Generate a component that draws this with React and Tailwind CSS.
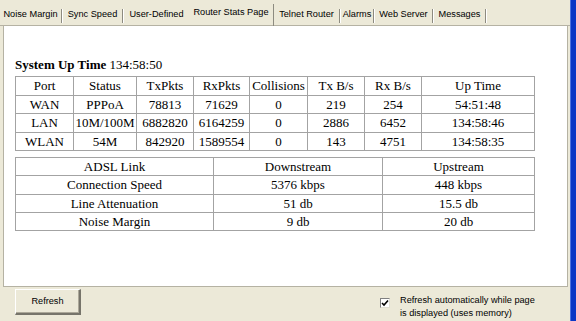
import React, { useState } from 'react';

// Pestañas de la ventana de configuración
const tabs = [
    { label: 'Noise Margin', cls: 'w-[63px]' },
    { label: 'Sync Speed', cls: 'w-[61px]' },
    { label: 'User-Defined', cls: 'w-[65px]', noSep: true },
    { label: 'Router Stats Page', cls: 'w-[85px]', active: true },
    { label: 'Telnet Router', cls: 'w-[67px]' },
    { label: 'Alarms', cls: 'w-[34px]' },
    { label: 'Web Server', cls: 'w-[59px]' },
    { label: 'Messages', cls: 'w-[53px]' },
];

const portCols = ['w-[58px]', 'w-[63px]', 'w-[57px]', 'w-[56px]', 'w-[58px]', 'w-[57px]', 'w-[57px]', 'w-[113px]'];
const portHead = ['Port', 'Status', 'TxPkts', 'RxPkts', 'Collisions', 'Tx B/s', 'Rx B/s', 'Up Time'];
const portRows = [
    ['WAN', 'PPPoA', '78813', '71629', '0', '219', '254', '54:51:48'],
    ['LAN', '10M/100M', '6882820', '6164259', '0', '2886', '6452', '134:58:46'],
    ['WLAN', '54M', '842920', '1589554', '0', '143', '4751', '134:58:35'],
];

const adslRows = [
    ['ADSL Link', 'Downstream', 'Upstream'],
    ['Connection Speed', '5376 kbps', '448 kbps'],
    ['Line Attenuation', '51 db', '15.5 db'],
    ['Noise Margin', '9 db', '20 db'],
];

const cell = 'border border-[#a3a3a3] p-0 text-center align-middle whitespace-nowrap';

function Tab({ tab }) {
    if (tab.active) {
        return (
            <div className={`${tab.cls} h-[22px] mt-[4px] flex border-r border-[#8d8b80]`}>
                <span className="flex-1 text-center pt-[3px]">{tab.label}</span>
            </div>
        );
    }
    return (
        <div className={`${tab.cls} h-full flex`}>
            <span className="flex-1 text-center pt-[9px]">{tab.label}</span>
            {!tab.noSep && (
                <span className="mt-[9px] h-[14px] w-[2px] border-l border-[#8d8b80] border-r border-r-white" />
            )}
        </div>
    );
}

export default function App() {
    const [auto, setAuto] = useState(true);

    return (
        <div className="w-[576px] h-[321px] flex bg-[#ece9d8] overflow-hidden font-['Liberation_Sans',Arial,sans-serif] text-[9.2px] leading-[11px] text-black">
            <div className="w-[570px] flex flex-col">
                {/* Tira de pestañas */}
                <div className="h-[26px] flex items-start border-b border-[#b5b2a3]">
                    {tabs.map((t) => (
                        <Tab key={t.label} tab={t} />
                    ))}
                </div>

                {/* Panel blanco con las tablas */}
                <div className="h-[261px] ml-[3px] mr-[2px] bg-white border-l border-r border-b border-[#b5b2a3] pl-[11px] pt-[31px] font-['Liberation_Serif','Times_New_Roman',serif] text-[13px] leading-[15px]">
                    <p>
                        <span className="font-bold">System Up Time</span> 134:58:50
                    </p>

                    <table className="mt-[4px] border-collapse table-fixed w-[519px]">
                        <colgroup>
                            {portCols.map((c, i) => (
                                <col key={i} className={c} />
                            ))}
                        </colgroup>
                        <tbody>
                            <tr className="h-[18.5px]">
                                {portHead.map((h) => (
                                    <td key={h} className={cell}>{h}</td>
                                ))}
                            </tr>
                            {portRows.map((r) => (
                                <tr key={r[0]} className="h-[18.5px]">
                                    {r.map((v, i) => (
                                        <td key={i} className={cell}>{v}</td>
                                    ))}
                                </tr>
                            ))}
                        </tbody>
                    </table>

                    <table className="mt-[6px] border-collapse table-fixed w-[519px]">
                        <colgroup>
                            <col className="w-[198px]" />
                            <col className="w-[169px]" />
                            <col className="w-[152px]" />
                        </colgroup>
                        <tbody>
                            {adslRows.map((r) => (
                                <tr key={r[0]} className="h-[18.25px]">
                                    {r.map((v, i) => (
                                        <td key={i} className={cell}>{v}</td>
                                    ))}
                                </tr>
                            ))}
                        </tbody>
                    </table>
                </div>

                {/* Pie: botón y casilla */}
                <div className="flex-1 flex items-start">
                    <button className="ml-[15px] mt-[2px] w-[66px] h-[26px] bg-[#ece9d8] border-t border-l border-white border-b-2 border-r-2 border-b-[#76746a] border-r-[#76746a] shadow-[inset_-1px_-1px_0_#aca899]">
                        Refresh
                    </button>
                    <label className="ml-[299px] mt-[7px] flex items-start gap-[10px] cursor-pointer">
                        <span
                            onClick={() => setAuto(!auto)}
                            className="mt-[4px] w-[10px] h-[10px] bg-white border-t border-l border-[#808080] border-b border-r border-b-[#e0ded3] border-r-[#e0ded3] flex items-center justify-center"
                        >
                            {auto && (
                                <svg width="8" height="8" viewBox="0 0 8 8">
                                    <path d="M1 4 L3 6 L7 1.5" stroke="#000" strokeWidth="1.6" fill="none" />
                                </svg>
                            )}
                        </span>
                        <span className="leading-[13px]">
                            Refresh automatically while page
                            <br />
                            is displayed (uses memory)
                        </span>
                    </label>
                </div>
            </div>

            {/* Borde azul de la ventana */}
            <div className="w-[6px] bg-[#0b37c5] border-l border-[#4d73e0]" />
        </div>
    );
}
